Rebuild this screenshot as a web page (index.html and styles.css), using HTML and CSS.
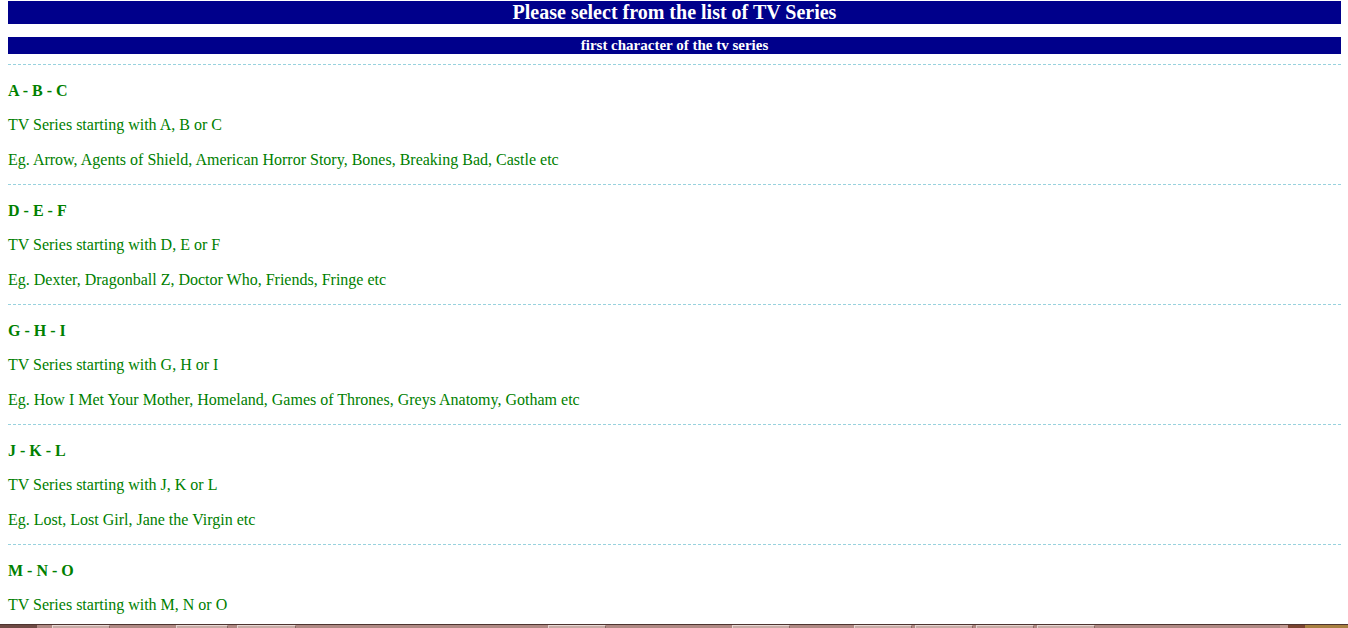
FILE: index.html
```html
<!DOCTYPE html>
<html>
<head>
<meta charset="utf-8">
<title>TV Series</title>
<link rel="stylesheet" href="styles.css">
</head>
<body>
<div class="page">
  <div class="title">Please select from the list of TV Series</div>
  <div class="subtitle">first character of the tv series</div>

  <div class="group">
    <p class="head">A - B - C</p>
    <p>TV Series starting with A, B or C</p>
    <p>Eg. Arrow, Agents of Shield, American Horror Story, Bones, Breaking Bad, Castle etc</p>
  </div>
  <div class="group">
    <p class="head">D - E - F</p>
    <p>TV Series starting with D, E or F</p>
    <p>Eg. Dexter, Dragonball Z, Doctor Who, Friends, Fringe etc</p>
  </div>
  <div class="group">
    <p class="head">G - H - I</p>
    <p>TV Series starting with G, H or I</p>
    <p>Eg. How I Met Your Mother, Homeland, Games of Thrones, Greys Anatomy, Gotham etc</p>
  </div>
  <div class="group">
    <p class="head">J - K - L</p>
    <p>TV Series starting with J, K or L</p>
    <p>Eg. Lost, Lost Girl, Jane the Virgin etc</p>
  </div>
  <div class="group">
    <p class="head">M - N - O</p>
    <p>TV Series starting with M, N or O</p>
  </div>
</div>

<div class="strip">
  <span class="seg dark1"></span>
  <span class="seg g15"></span>
  <span class="tab w58"></span>
  <span class="seg g66"></span>
  <span class="tab w52"></span>
  <span class="seg g9"></span>
  <span class="tab w59"></span>
  <span class="seg g252"></span>
  <span class="tab w58"></span>
  <span class="seg g126"></span>
  <span class="tab w58"></span>
  <span class="seg g64"></span>
  <span class="tab w58"></span>
  <span class="seg g3"></span>
  <span class="tab w58"></span>
  <span class="seg g3"></span>
  <span class="tab w58"></span>
  <span class="seg g3"></span>
  <span class="tab w58"></span>
  <span class="seg fill"></span>
  <span class="seg light8"></span>
  <span class="seg brown17"></span>
  <span class="seg gold"></span>
</div>
</body>
</html>
```

FILE: styles.css
```css
html, body {
  margin: 0;
  padding: 0;
  background: #ffffff;
}

body {
  font-family: "Liberation Serif", "Times New Roman", serif;
  font-size: 16px;
  color: #008000;
}

.page {
  margin: 0 7px 0 8px;
  padding-top: 1px;
}

.title {
  background: #00008b;
  color: #ffffff;
  font-weight: bold;
  font-size: 20px;
  height: 23px;
  line-height: 23px;
  text-align: center;
}

.subtitle {
  margin-top: 13px;
  background: #00008b;
  color: #ffffff;
  font-weight: bold;
  font-size: 15px;
  height: 17px;
  line-height: 17px;
  text-align: center;
}

.group {
  border-top: 1px dashed #98d2de;
  margin-top: 10px;
}

.group + .group {
  margin-top: 0;
}

.group p {
  margin: 16px 0;
  line-height: 18.34px;
}

.group p.head {
  font-weight: bold;
  margin-top: 17px;
}

.group p:last-child {
  margin-bottom: 15px;
}

.strip {
  position: fixed;
  left: 0;
  right: 0;
  bottom: 0;
  height: 4px;
  display: flex;
  background: #b08a84;
  border-top: 1px solid #4e3430;
  box-sizing: border-box;
}

.seg, .tab {
  display: block;
  height: 100%;
  flex: none;
}

.tab {
  background: #c8aca6;
  border-left: 1px solid #e6d6d2;
  border-top: 1px solid #e6d6d2;
  border-right: 1px solid #8a6a64;
  box-sizing: border-box;
}

.dark1 { width: 37px; background: #6e4a44; }
.g15 { width: 15px; }
.g66 { width: 66px; }
.g9 { width: 9px; }
.g252 { width: 252px; }
.g126 { width: 126px; }
.g64 { width: 64px; }
.g3 { width: 3px; }
.w58 { width: 58px; }
.w52 { width: 52px; }
.w59 { width: 59px; }
.fill { flex: 1 1 auto; }
.light8 { width: 8px; background: #c09890; }
.brown17 { width: 17px; background: #7a4430; }
.gold { width: 43px; background: #a88040; }
```
